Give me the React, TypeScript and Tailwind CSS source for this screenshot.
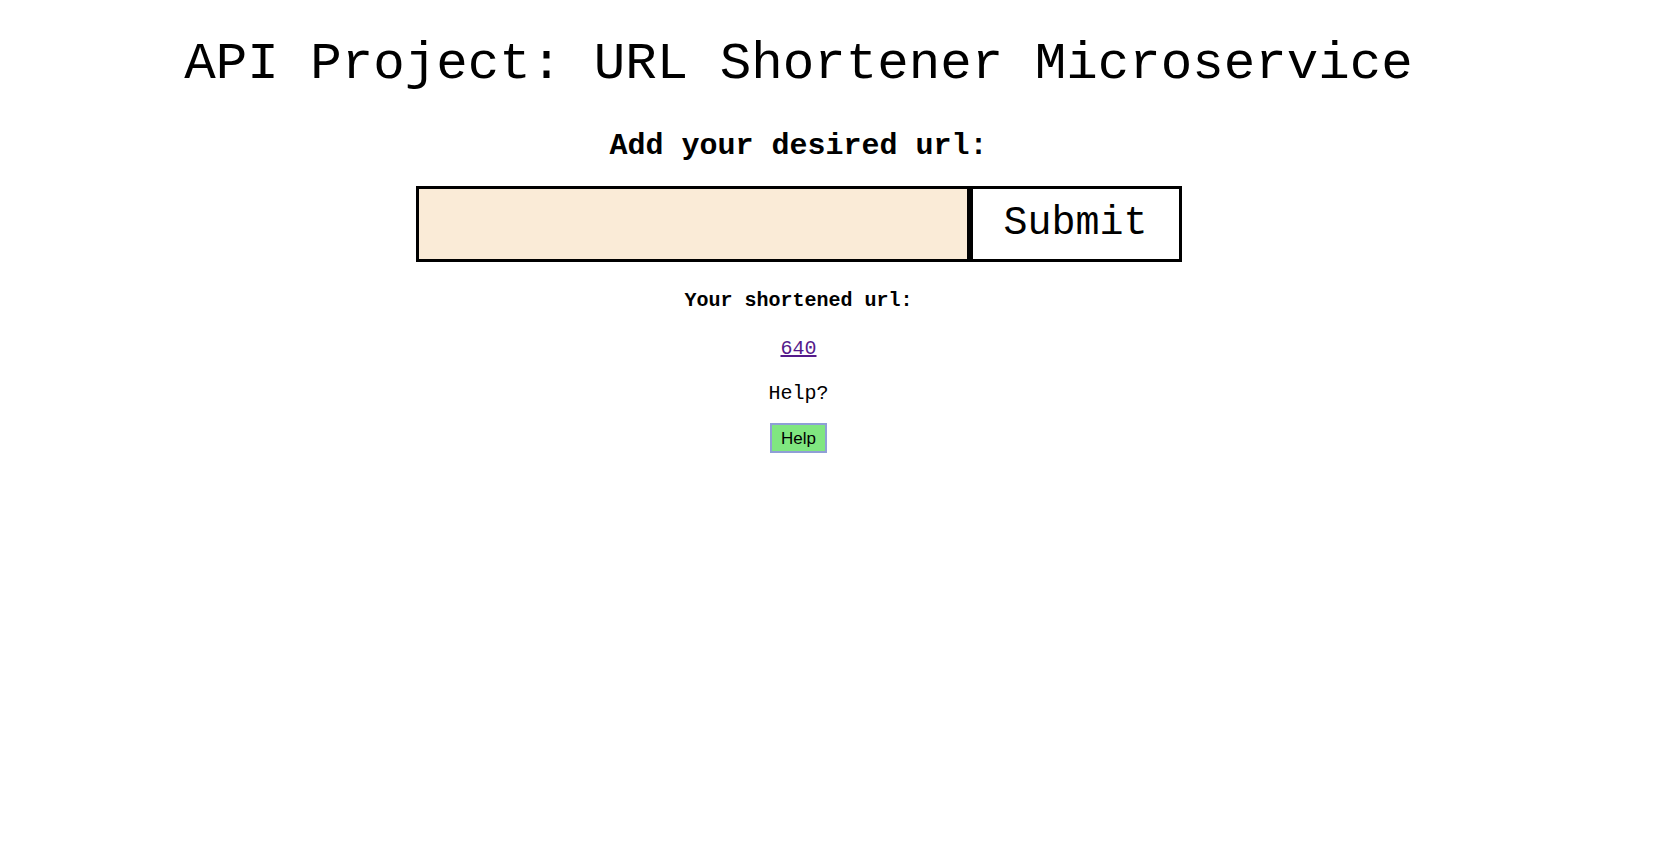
import { useState } from "react"

const mono = "font-['Liberation_Mono','Courier_New',monospace]"

export default function App() {
  const [url, setUrl] = useState("")

  return (
    <div className={`min-h-screen bg-white text-black ${mono}`}>
      <div className="w-[1597px] flex flex-col items-center">
        <h1 className="mt-[34px] text-[52.5px] leading-[60px] font-normal">
          API Project: URL Shortener Microservice
        </h1>

        <h2 className="mt-[35px] text-[30px] leading-[34px] font-bold">Add your desired url:</h2>

        <form className="mt-[23px] flex" onSubmit={(e) => e.preventDefault()}>
          <input
            type="text"
            value={url}
            onChange={(e) => setUrl(e.target.value)}
            className="w-[554px] h-[76px] bg-[#faebd7] border-[3px] border-black outline-none px-3 text-[30px]"
          />
          <button
            type="submit"
            className={`w-[212px] h-[76px] bg-white border-[3px] border-black text-[40px] ${mono}`}
          >
            Submit
          </button>
        </form>

        <h3 className="mt-[27px] text-[20px] leading-[23px] font-bold">Your shortened url:</h3>

        <a href="#" className="mt-[25px] text-[20px] leading-[23px] text-[#551a8b] underline">
          640
        </a>

        <p className="mt-[22px] text-[20px] leading-[23px]">Help?</p>

        <button className="mt-[18px] w-[57px] h-[30px] bg-[#80e680] border-2 border-[#8f9fd6] font-['Liberation_Sans',Arial,sans-serif] text-[17px] leading-none">
          Help
        </button>
      </div>
    </div>
  )
}
